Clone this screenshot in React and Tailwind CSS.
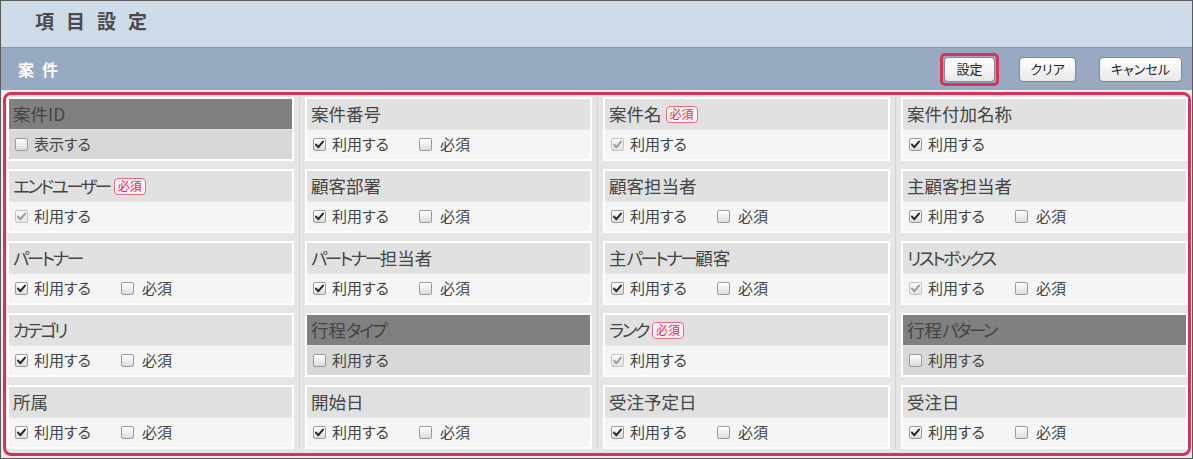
import React from "react";

const FONT = { fontFamily: '"Noto Sans CJK JP", "Noto Sans", sans-serif', fontFeatureSettings: '"palt"' };

function Check({ checked, disabled }) {
  return (
    <span
      className={
        "inline-flex items-center justify-center w-[13px] h-[13px] rounded-[2px] border shrink-0 " +
        (disabled
          ? "border-[#c4c4c4] bg-gradient-to-b from-[#fafafa] to-[#e4e4e4]"
          : "border-[#9a9a9a] bg-gradient-to-b from-[#ffffff] to-[#dcdcdc]")
      }
    >
      {checked && (
        <svg width="11" height="11" viewBox="0 0 11 11">
          <path
            d="M2 5.6 L4.4 8.2 L9 2.6"
            fill="none"
            stroke={disabled ? "#9c9c9c" : "#2a2a2a"}
            strokeWidth="2"
            strokeLinecap="round"
            strokeLinejoin="round"
          />
        </svg>
      )}
    </span>
  );
}

function Badge() {
  return (
    <span className="ml-[4px] inline-flex items-center h-[17px] px-[3px] rounded-[4px] border border-[#e36b82] bg-[#fff3f5] text-[#e0284e] text-[12px] leading-none">
      必須
    </span>
  );
}

function Label({ text }) {
  const parts = text.split(/([\u30A0-\u30FF]+)/).filter(Boolean);
  return (
    <span>
      {parts.map((p, i) =>
        /[\u30A0-\u30FF]/.test(p) ? (
          <span key={i} className="tracking-[-2.5px]">{p}</span>
        ) : (
          <span key={i}>{p}</span>
        )
      )}
    </span>
  );
}

function Cell({ label, badge, dark, use, useDisabled, req, showLabel }) {
  return (
    <div className="border-2 border-white flex flex-col">
      <div
        className={
          "h-[30px] flex items-center pl-[4px] text-[17.5px] text-[#444] " +
          (dark ? "bg-[#808080]" : "bg-[#e1e1e1]")
        }
      >
        <Label text={label} />
        {badge && <Badge />}
      </div>
      <div
        className={
          "h-[29px] mt-px flex items-center pl-[6px] text-[15px] text-[#444] " +
          (dark ? "bg-[#d8d8d8]" : "bg-[#f5f5f5]")
        }
      >
        <Check checked={use} disabled={useDisabled} />
        <span className="ml-[6px] w-[87px]">{showLabel || "利用する"}</span>
        {req && (
          <>
            <Check checked={false} />
            <span className="ml-[8px]">必須</span>
          </>
        )}
      </div>
    </div>
  );
}

const cols = [
  [
    { label: "案件ID", dark: true, use: false, showLabel: "表示する" },
    { label: "エンドユーザー", badge: true, use: true, useDisabled: true },
    { label: "パートナー", use: true, req: true },
    { label: "カテゴリ", use: true, req: true },
    { label: "所属", use: true, req: true },
  ],
  [
    { label: "案件番号", use: true, req: true },
    { label: "顧客部署", use: true, req: true },
    { label: "パートナー担当者", use: true, req: true },
    { label: "行程タイプ", dark: true, use: false },
    { label: "開始日", use: true, req: true },
  ],
  [
    { label: "案件名", badge: true, use: true, useDisabled: true },
    { label: "顧客担当者", use: true, req: true },
    { label: "主パートナー顧客", use: true, req: true },
    { label: "ランク", badge: true, use: true, useDisabled: true },
    { label: "受注予定日", use: true, req: true },
  ],
  [
    { label: "案件付加名称", use: true },
    { label: "主顧客担当者", use: true, req: true },
    { label: "リストボックス", use: true, useDisabled: true, req: true },
    { label: "行程パターン", dark: true, use: false },
    { label: "受注日", use: true, req: true },
  ],
];

function Btn({ children, w }) {
  return (
    <button
      className={
        "h-[25px] rounded-[4px] border border-[#7d8a9b] bg-gradient-to-b from-[#ffffff] to-[#e8e8e8] text-[13px] text-[#222] flex items-center justify-center " +
        w
      }
    >
      {children}
    </button>
  );
}

export default function App() {
  return (
    <div className="w-[1193px] h-[459px] border border-[#5a5a5a] bg-[#ececec] overflow-hidden flex flex-col" style={FONT}>
      <div className="h-[47px] bg-[#cedcea] border-b border-[#8797ad] flex items-center pl-[34px] pb-[6px]">
        <span className="text-[19px] font-bold text-[#4a4a4a] tracking-[12px]">項目設定</span>
      </div>
      <div className="h-[42px] bg-[#97aac2] flex items-center pl-[17px] pr-[10px]">
        <span className="text-[16px] font-bold text-white tracking-[8px]">案件</span>
        <div className="ml-auto flex items-center">
          <div className="border-[3px] border-[#d7335a] rounded-[5px] p-[1px]">
            <Btn w="w-[51px]">設定</Btn>
          </div>
          <div className="ml-[20px]">
            <Btn w="w-[57px]">クリア</Btn>
          </div>
          <div className="ml-[23px]">
            <Btn w="w-[83px]">キャンセル</Btn>
          </div>
        </div>
      </div>
      <div className="pl-[2px] pt-[2px]">
        <div className="w-[1188px] border-[3px] border-[#d7335a] rounded-[8px] bg-[#e6e6e6] pt-[2px] pb-[4px] pl-px flex">
          {cols.map((col, i) => (
            <React.Fragment key={i}>
              {i > 0 && (
                <div className="w-[11px] flex justify-center">
                  <div className="w-px bg-[#d2d2d2]" />
                </div>
              )}
              <div className="w-[287px] flex flex-col gap-[8px]">
                {col.map((c, j) => (
                  <Cell key={j} {...c} />
                ))}
              </div>
            </React.Fragment>
          ))}
        </div>
      </div>
    </div>
  );
}
